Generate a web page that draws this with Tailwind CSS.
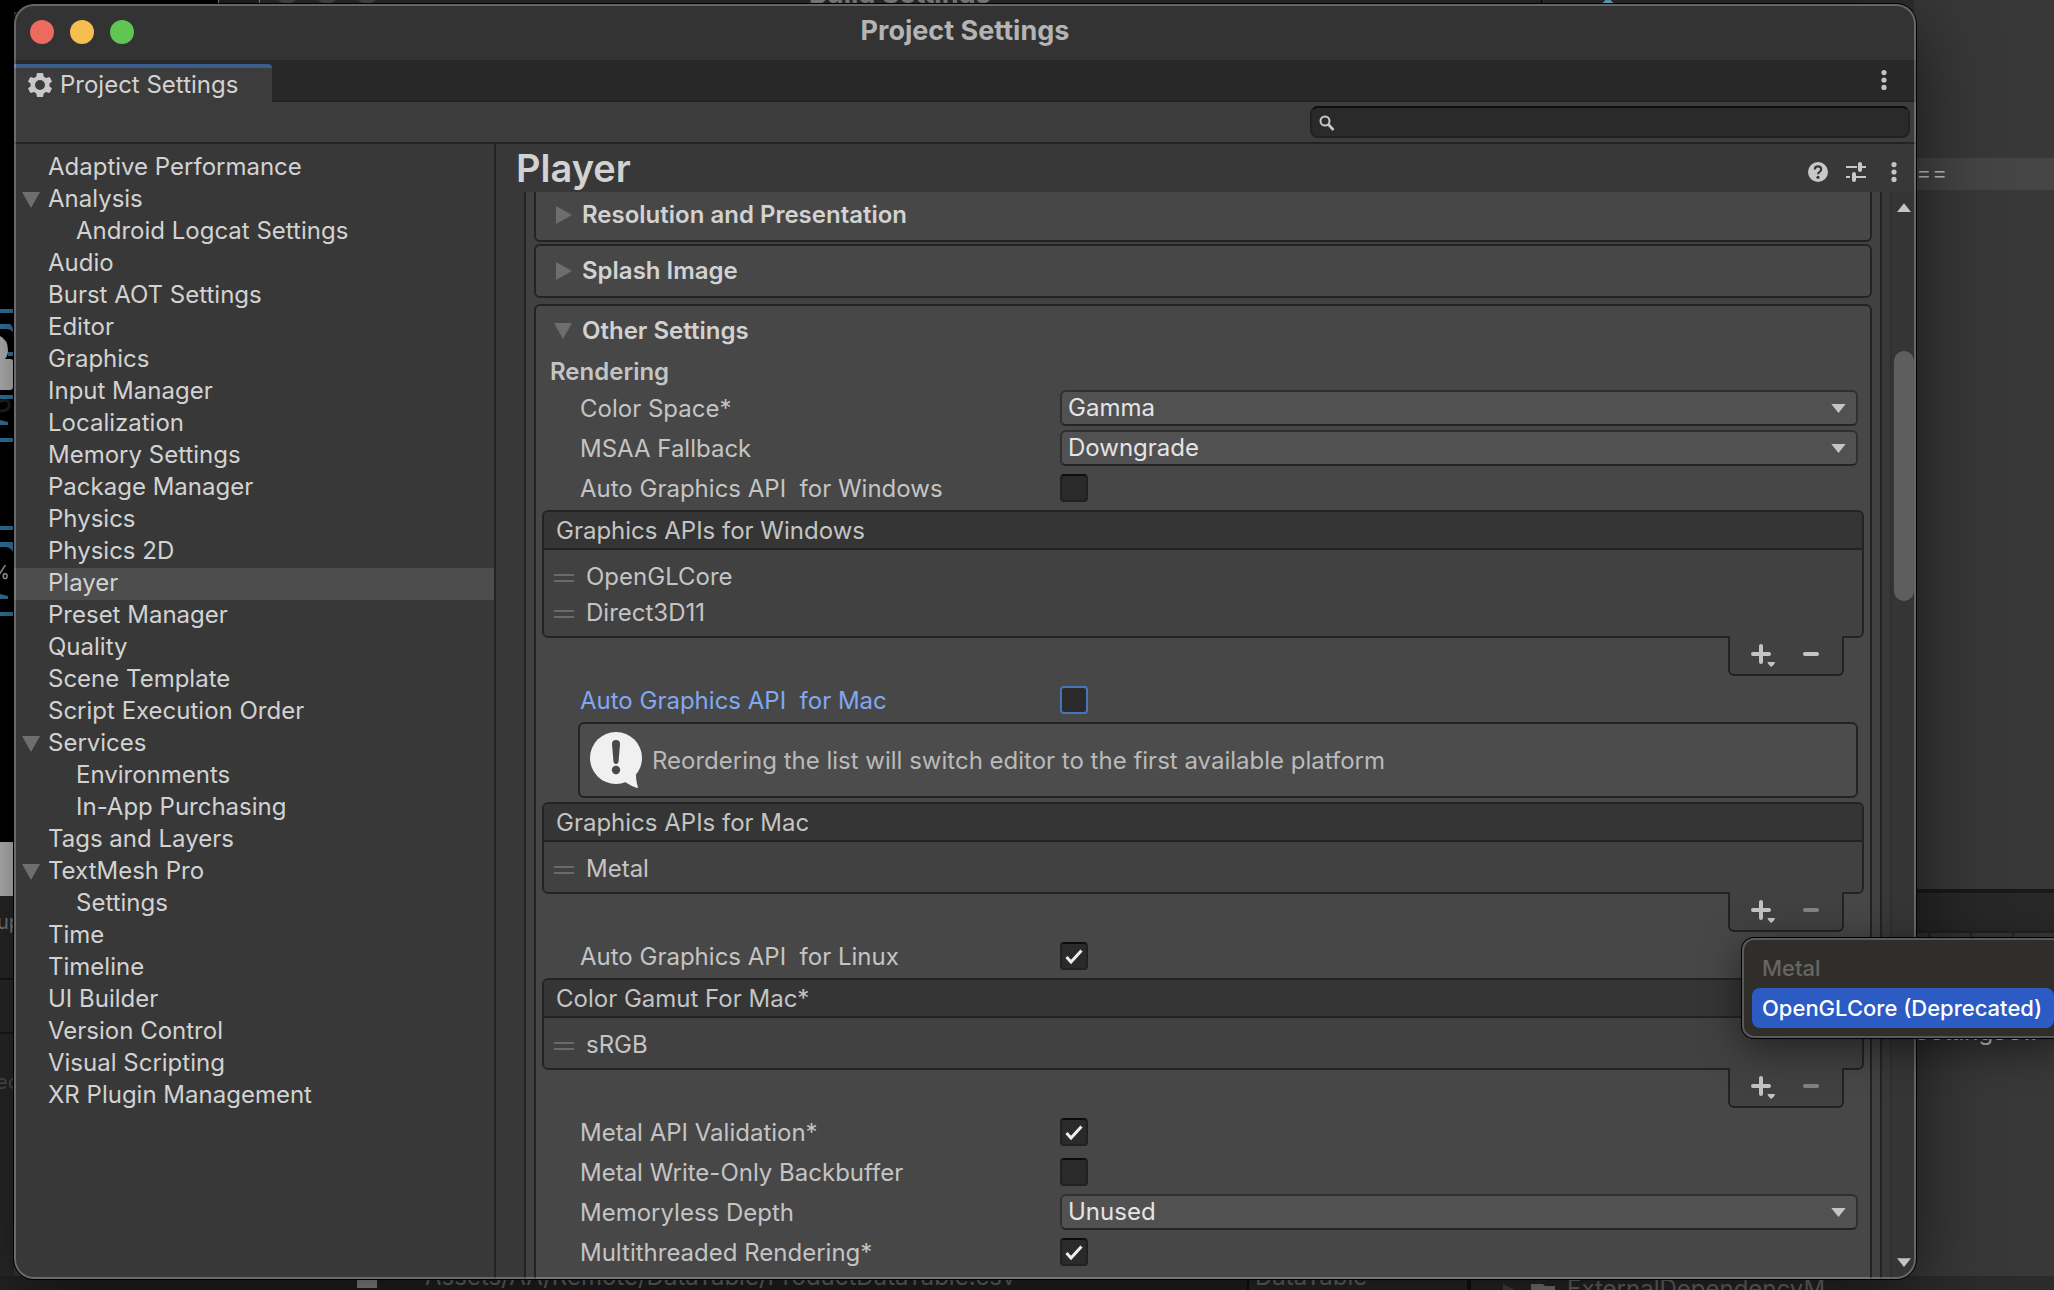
<!DOCTYPE html>
<html lang="en">
<head>
    <meta charset="UTF-8">
    <meta name="viewport" content="width=device-width, initial-scale=1.0">
    <title>Project Settings</title>
    <script src="https://cdn.jsdelivr.net/npm/@tailwindcss/browser@4"></script>
</head>
<body class="relative h-screen overflow-hidden bg-[#383838] font-[Inter,sans-serif] text-2xl leading-8 text-[#c4c4c4]">

    <!-- Shared icons -->
    <svg class="hidden">
        <symbol id="down" viewBox="0 0 16 10"><path d="M0 0h16l-8 10z" fill="currentColor"/></symbol>
        <symbol id="fold-open" viewBox="0 0 18 16"><path d="M0 0h18L9 16z" fill="#6e6e6e"/></symbol>
        <symbol id="fold-closed" viewBox="0 0 16 18"><path d="M0 0v18l16-9z" fill="#6e6e6e"/></symbol>
        <symbol id="dots" viewBox="0 0 6 20"><g fill="currentColor"><circle cx="3" cy="2.6" r="2.6"/><circle cx="3" cy="10" r="2.6"/><circle cx="3" cy="17.4" r="2.6"/></g></symbol>
        <symbol id="check" viewBox="0 0 28 28"><path d="M6.500 15l4.500 5L21.500 8.500" fill="none" stroke="#eeeeee" stroke-width="3"/></symbol>
        <symbol id="plus" viewBox="0 0 24 24"><path d="M2 11h16M10 3v16" stroke="currentColor" stroke-width="4" stroke-linecap="round"/><path d="M16.500 19h7.500q0 2-3.750 5q-3.750-3-3.750-5z" fill="currentColor"/></symbol>
        <symbol id="minus" viewBox="0 0 16 4"><path d="M2 2h12" stroke="currentColor" stroke-width="4" stroke-linecap="round"/></symbol>
    </svg>

    <!-- Windows behind the dialog -->
    <div class="absolute inset-x-0 top-0 h-3 bg-[#2d2d2d] flex overflow-hidden">
        <div class="w-[218px] shrink-0 bg-black"></div>
        <div class="w-[42px] shrink-0 border-x border-[#8a8a8a] bg-[#222222]"></div>
        <div class="flex gap-[18px] pl-4">
            <span class="size-[22px] -mt-[18px] rounded-full bg-[#4a4a4a]"></span>
            <span class="size-[22px] -mt-[18px] rounded-full bg-[#4a4a4a]"></span>
            <span class="size-[22px] -mt-[18px] rounded-full bg-[#4a4a4a]"></span>
        </div>
        <p class="-mt-[22px] ml-[431px] text-[27px] font-bold text-[#8a8a8a]">Build Settings</p>
        <span class="ml-[550px] h-3 border-l border-black"></span>
        <span class="ml-[60px] size-3 rotate-45 bg-[#6fb0dc]"></span>
    </div>
    <div class="absolute left-0 top-0 bottom-0 w-[14px] overflow-hidden bg-black flex flex-col">
        <div class="h-[842px] shrink-0">
            <svg class="w-[14px] h-[842px]" viewBox="0 0 14 842">
                <g fill="#3a7fb0">
                    <path d="M0 309h13v4H0zM0 324h10q3 1 3 8q-3-3-6-3H0zM8 352h5v4H8zM0 395h13v4H0zM0 420l8 2v3H0zM0 438h13v4H0zM0 526h13v4H0zM0 542h13v10q-3-5-8-5H0zM0 594l8 2v3H0zM0 612h13v4H0z"/>
                </g>
                <path d="M0 336q8 4 8 14q0 6-3 9h6q2 0 2 2v26q0 3-3 3H0z" fill="#c8c8c8"/>
                <path d="M0 402q5-3 9 0v5q-2 4-9 4" fill="none" stroke="#222222" stroke-width="3"/>
            </svg>
            <p class="-mt-[285px] -ml-[8px] text-lg leading-8">%</p>
        </div>
        <div class="h-[54px] shrink-0 bg-[#c8c8c8]"></div>
        <div class="grow bg-[#2a2a2a] text-xl leading-8 text-[#888888]">
            <p class="pt-[10px] -ml-[3px] h-[84px] border-b-2 border-[#191919]">up</p>
            <p class="h-[54px] border-b-2 border-[#191919]"></p>
            <p class="pt-8 -ml-[4px] text-[#555555]">ect</p>
        </div>
    </div>
    <div class="absolute right-0 top-0 bottom-0 w-[140px] overflow-hidden flex flex-col bg-[#383838]">
        <div class="mt-[158px] h-8 shrink-0 bg-[#454545] pl-[2px] font-light leading-[30px]">==</div>
        <div class="mt-[699px] h-[42px] shrink-0 border-t-4 border-[#191919] bg-[#282828]"></div>
        <div class="h-10 shrink-0 flex border-t-2 border-[#232323] pl-[14px]">
            <span class="w-[52px] border-l-2 border-[#232323]"></span><span class="w-[52px] border-l-2 border-[#232323]"></span><span class="w-[52px] border-l-2 border-[#232323]"></span>
        </div>
        <p class="mt-[45px] text-[#d2d2d2]">SettingsUI.</p>
    </div>
    <div class="absolute inset-x-0 bottom-0 h-[14px] overflow-hidden flex bg-[#242424] text-[#777777]">
        <span class="ml-[357px] mt-1 h-2 w-5 shrink-0 bg-[#9a9a9a]"></span>
        <p class="ml-12 -mt-[15px] w-[824px] shrink-0 border-r-2 border-[#111111]">Assets/AA/Remote/DataTable/ProductDataTable.csv</p>
        <p class="pl-[6px] -mt-[15px] w-[222px] shrink-0 border-r-4 border-[#111111] bg-[#2b2b2b]">DataTable</p>
        <span class="w-full flex bg-[#2b2b2b]">
            <svg class="ml-8 mt-2 h-4 w-16 shrink-0" viewBox="0 0 64 16"><path d="M0 0v16l16-8z" fill="#4c4c4c"/><path d="M28 0q0-2 2-2h8l4 4h10v14H28z" fill="#8a8a8a"/></svg>
            <span class="-mt-[3px]">ExternalDependencyM</span>
        </span>
    </div>

    <!-- Project Settings window -->
    <main class="absolute left-[14px] right-[138px] top-1 bottom-[11px] flex flex-col overflow-hidden rounded-[20px] bg-[#383838] ring-1 ring-black shadow-[0_20px_80px_rgba(0,0,0,0.6)]">
        <header class="relative h-14 shrink-0 flex items-center justify-center bg-[#333333]">
            <div class="absolute left-4 flex gap-4">
                <button aria-label="Close" class="size-6 rounded-full bg-[#ec6a5e]"></button>
                <button aria-label="Minimize" class="size-6 rounded-full bg-[#f4bf4f]"></button>
                <button aria-label="Zoom" class="size-6 rounded-full bg-[#61c554]"></button>
            </div>
            <h1 class="pb-[2px] text-[27px] font-bold text-[#b4b4b4]">Project Settings</h1>
        </header>

        <div class="h-[42px] shrink-0 flex items-end justify-between bg-[#282828]">
            <button class="h-[38px] w-[258px] flex items-center gap-2 rounded-tr-sm border-t-4 border-[#3a5f8f] bg-[#3c3c3c] pl-[14px] text-[#d2d2d2]">
                <svg class="size-6" viewBox="0 0 24 24"><path fill="#c8c8c8" fill-rule="evenodd" d="M9 0h6l.8 3.800 2.300 1.300 3.500-1.200 2.400 4.600-2.600 2.300v2.400l2.600 2.300-2.400 4.600-3.500-1.200-2.300 1.300L15 24H9l-.8-3.800-2.300-1.300-3.500 1.200L0 15.500l2.600-2.300v-2.400L0 8.500l2.400-4.600 3.500 1.200 2.300-1.300zM12 7a5 5 0 1 0 0 10a5 5 0 0 0 0-10z"/></svg>
                Project Settings
            </button>
            <div class="h-full grow flex items-center justify-end border-b-2 border-[#232323] pr-[29px]">
                <button aria-label="Window menu"><svg class="h-5 w-[6px]"><use href="#dots"/></svg></button>
            </div>
        </div>

        <div class="h-[42px] shrink-0 flex items-center justify-end border-b-2 border-[#232323] bg-[#3c3c3c] pr-[6px]">
            <label class="relative w-[600px]">
                <svg class="absolute left-[9px] top-[9px] size-4" viewBox="0 0 16 16" fill="none" stroke="#c8c8c8" stroke-width="2"><circle cx="6" cy="6" r="4.500"/><path d="M9 9l5.500 6" stroke-width="2.600"/></svg>
                <input type="search" aria-label="Search settings" class="block h-8 w-full rounded-lg border-2 border-[#212121] border-t-[#0d0d0d] bg-[#2a2a2a] pl-8 outline-none">
            </label>
        </div>

        <div class="min-h-0 grow flex">
            <nav class="w-[482px] shrink-0 border-r-2 border-[#232323] pt-2 leading-[30px] text-[#d2d2d2]">
                <a href="#" class="block h-8 pl-[34px]">Adaptive Performance</a>
                <a href="#" class="flex h-8 gap-2 pl-2"><svg class="mt-2 h-4 w-[18px]"><use href="#fold-open"/></svg>Analysis</a>
                <a href="#" class="block h-8 pl-[62px]">Android Logcat Settings</a>
                <a href="#" class="block h-8 pl-[34px]">Audio</a>
                <a href="#" class="block h-8 pl-[34px]">Burst AOT Settings</a>
                <a href="#" class="block h-8 pl-[34px]">Editor</a>
                <a href="#" class="block h-8 pl-[34px]">Graphics</a>
                <a href="#" class="block h-8 pl-[34px]">Input Manager</a>
                <a href="#" class="block h-8 pl-[34px]">Localization</a>
                <a href="#" class="block h-8 pl-[34px]">Memory Settings</a>
                <a href="#" class="block h-8 pl-[34px]">Package Manager</a>
                <a href="#" class="block h-8 pl-[34px]">Physics</a>
                <a href="#" class="block h-8 pl-[34px]">Physics 2D</a>
                <a href="#" class="block h-8 pl-[34px] bg-[#4d4d4d]">Player</a>
                <a href="#" class="block h-8 pl-[34px]">Preset Manager</a>
                <a href="#" class="block h-8 pl-[34px]">Quality</a>
                <a href="#" class="block h-8 pl-[34px]">Scene Template</a>
                <a href="#" class="block h-8 pl-[34px]">Script Execution Order</a>
                <a href="#" class="flex h-8 gap-2 pl-2"><svg class="mt-2 h-4 w-[18px]"><use href="#fold-open"/></svg>Services</a>
                <a href="#" class="block h-8 pl-[62px]">Environments</a>
                <a href="#" class="block h-8 pl-[62px]">In-App Purchasing</a>
                <a href="#" class="block h-8 pl-[34px]">Tags and Layers</a>
                <a href="#" class="flex h-8 gap-2 pl-2"><svg class="mt-2 h-4 w-[18px]"><use href="#fold-open"/></svg>TextMesh Pro</a>
                <a href="#" class="block h-8 pl-[62px]">Settings</a>
                <a href="#" class="block h-8 pl-[34px]">Time</a>
                <a href="#" class="block h-8 pl-[34px]">Timeline</a>
                <a href="#" class="block h-8 pl-[34px]">UI Builder</a>
                <a href="#" class="block h-8 pl-[34px]">Version Control</a>
                <a href="#" class="block h-8 pl-[34px]">Visual Scripting</a>
                <a href="#" class="block h-8 pl-[34px]">XR Plugin Management</a>
            </nav>

            <section class="min-w-0 grow flex flex-col">
                <div class="h-12 shrink-0 flex items-center pl-5 pr-[19px]">
                    <h2 class="grow text-[38px] leading-[44px] font-semibold text-[#d2d2d2]">Player</h2>
                    <div class="flex items-center gap-[18px] pt-2">
                        <button aria-label="Help"><svg class="size-5" viewBox="0 0 20 20"><circle cx="10" cy="10" r="10" fill="#c8c8c8"/><path d="M6.800 7.500q0-3.200 3.200-3.200t3.200 3q0 1.600-1.600 2.600q-1.600.9-1.600 2.300" fill="none" stroke="#383838" stroke-width="2.200"/><circle cx="10" cy="15.300" r="1.600" fill="#383838"/></svg></button>
                        <button aria-label="Presets"><svg class="size-5" viewBox="0 0 20 20" stroke="#c8c8c8" stroke-width="2"><path d="M0 5h11M16 5h4M0 15h4M9 15h11"/><path d="M14 2v6M8 12v6" stroke-width="4" stroke-linecap="round"/></svg></button>
                        <button aria-label="Player menu" class="pl-[7px]"><svg class="h-5 w-[6px]"><use href="#dots"/></svg></button>
                    </div>
                </div>

                <div class="min-h-0 grow flex">
                    <div class="min-w-0 grow ml-7 mr-2 flex flex-col overflow-hidden border-x-2 border-[#232323] bg-[#414141] px-2">
                        <button class="h-[50px] shrink-0 flex items-center gap-[10px] rounded-b-md border-x-2 border-b-2 border-[#232323] bg-[#474747] pl-5 pb-[2px] font-semibold text-[#d2d2d2]">
                            <svg class="h-[18px] w-4"><use href="#fold-closed"/></svg>Resolution and Presentation
                        </button>
                        <button class="mt-[2px] h-[54px] shrink-0 flex items-center gap-[10px] rounded-md border-2 border-[#232323] bg-[#474747] pl-5 font-semibold text-[#d2d2d2]">
                            <svg class="h-[18px] w-4"><use href="#fold-closed"/></svg>Splash Image
                        </button>

                        <div class="mt-[6px] h-[1200px] shrink-0 rounded-t-md border-2 border-[#232323] bg-[#474747] px-[6px]">
                            <button class="h-[50px] flex items-center gap-[10px] pl-3 font-semibold text-[#d2d2d2]">
                                <svg class="h-4 w-[18px]"><use href="#fold-open"/></svg>Other Settings
                            </button>
                            <h3 class="h-8 pl-2 leading-8 font-semibold">Rendering</h3>

                            <div class="h-10 flex items-center pl-[38px] pr-[6px]">
                                <label for="color-space" class="w-[480px] shrink-0 pt-[2px]">Color Space*</label>
                                <div class="relative grow">
                                    <select id="color-space" class="block h-9 w-full appearance-none rounded-md border-2 border-[#303030] border-b-[#242424] bg-[#515151] pl-[6px] leading-8 text-[#e4e4e4]"><option>Gamma</option><option>Linear</option></select>
                                    <svg class="pointer-events-none absolute right-3 top-[14px] h-[9px] w-[15px]"><use href="#down"/></svg>
                                </div>
                            </div>
                            <div class="h-10 flex items-center pl-[38px] pr-[6px]">
                                <label for="msaa" class="w-[480px] shrink-0 pt-[2px]">MSAA Fallback</label>
                                <div class="relative grow">
                                    <select id="msaa" class="block h-9 w-full appearance-none rounded-md border-2 border-[#303030] border-b-[#242424] bg-[#515151] pl-[6px] leading-8 text-[#e4e4e4]"><option>Downgrade</option><option>Upgrade</option></select>
                                    <svg class="pointer-events-none absolute right-3 top-[14px] h-[9px] w-[15px]"><use href="#down"/></svg>
                                </div>
                            </div>
                            <div class="h-10 flex items-center pl-[38px]">
                                <label for="auto-windows" class="w-[480px] shrink-0 pt-[2px] whitespace-pre">Auto Graphics API  for Windows</label>
                                <input id="auto-windows" type="checkbox" class="size-7 appearance-none rounded-sm border-2 border-[#212121] border-t-[#0d0d0d] bg-[#2a2a2a]">
                            </div>

                            <div class="mt-[2px]">
                                <div class="rounded-md border-2 border-[#232323] bg-[#414141]">
                                    <h4 class="h-[38px] rounded-t-sm border-b-2 border-[#232323] bg-[#353535] pl-3 leading-[38px]">Graphics APIs for Windows</h4>
                                    <ul class="pt-2 pb-[6px]">
                                        <li class="h-9 flex items-center gap-3 pl-[10px] pt-[2px]"><span class="mt-[2px] h-2 w-5 border-y-2 border-[#6b6b6b]"></span>OpenGLCore</li>
                                        <li class="h-9 flex items-center gap-3 pl-[10px] pt-[2px]"><span class="mt-[2px] h-2 w-5 border-y-2 border-[#6b6b6b]"></span>Direct3D11</li>
                                    </ul>
                                </div>
                                <div class="relative -mt-[2px] ml-auto mr-5 h-10 w-[116px] flex items-start gap-7 rounded-b-md border-x-2 border-b-2 border-[#232323] bg-[#414141] pl-[21px]">
                                    <button aria-label="Add Windows API" class="pt-[7px]"><svg class="size-6"><use href="#plus"/></svg></button>
                                    <button aria-label="Remove Windows API" class="flex pt-4"><svg class="h-1 w-4"><use href="#minus"/></svg></button>
                                </div>
                            </div>

                            <div class="mt-1 h-10 flex items-center pl-[38px]">
                                <label for="auto-mac" class="w-[480px] shrink-0 pt-[2px] whitespace-pre text-[#81a8f0]">Auto Graphics API  for Mac</label>
                                <input id="auto-mac" type="checkbox" class="size-7 appearance-none rounded-sm border-2 border-[#4576b8] bg-[#2a2a2a]">
                            </div>
                            <div class="mt-[2px] ml-9 mr-[6px] h-[76px] flex items-center rounded-md border-2 border-[#232323] bg-[#4c4c4c] pl-[10px] text-[#bababa]">
                                <svg class="h-14 w-[52px] shrink-0" viewBox="0 0 52 56"><circle cx="26" cy="26" r="26" fill="#f0f0f0"/><path d="M35 50l11-8q0 8 2 13q0 1-1 1q-6-2-12-6z" fill="#f0f0f0"/><path d="M22 12q0-4 4-4t4 4l-1.500 18q-.5 2-2.500 2t-2.500-2z" fill="#484848"/><circle cx="26" cy="38" r="4.200" fill="#484848"/></svg>
                                <p class="pl-[10px] pt-[2px]">Reordering the list will switch editor to the first available platform</p>
                            </div>

                            <div class="mt-1">
                                <div class="rounded-md border-2 border-[#232323] bg-[#414141]">
                                    <h4 class="h-[38px] rounded-t-sm border-b-2 border-[#232323] bg-[#353535] pl-3 leading-[38px]">Graphics APIs for Mac</h4>
                                    <ul class="pt-2 pb-[6px]">
                                        <li class="h-9 flex items-center gap-3 pl-[10px] pt-[2px]"><span class="mt-[2px] h-2 w-5 border-y-2 border-[#6b6b6b]"></span>Metal</li>
                                    </ul>
                                </div>
                                <div class="relative -mt-[2px] ml-auto mr-5 h-10 w-[116px] flex items-start gap-7 rounded-b-md border-x-2 border-b-2 border-[#232323] bg-[#414141] pl-[21px]">
                                    <button aria-label="Add Mac API" class="pt-[7px]"><svg class="size-6"><use href="#plus"/></svg></button>
                                    <button aria-label="Remove Mac API" disabled class="flex pt-4 text-[#828282]"><svg class="h-1 w-4"><use href="#minus"/></svg></button>
                                </div>
                            </div>

                            <div class="mt-1 h-10 flex items-center pl-[38px]">
                                <label for="auto-linux" class="w-[480px] shrink-0 pt-[2px] whitespace-pre">Auto Graphics API  for Linux</label>
                                <div class="relative">
                                    <input id="auto-linux" type="checkbox" checked class="peer block size-7 appearance-none rounded-sm border-2 border-[#212121] border-t-[#0d0d0d] bg-[#2a2a2a]">
                                    <svg class="pointer-events-none absolute inset-0 hidden size-7 peer-checked:block"><use href="#check"/></svg>
                                </div>
                            </div>

                            <div class="mt-[2px]">
                                <div class="rounded-md border-2 border-[#232323] bg-[#414141]">
                                    <h4 class="h-[38px] rounded-t-sm border-b-2 border-[#232323] bg-[#353535] pl-3 leading-[38px]">Color Gamut For Mac*</h4>
                                    <ul class="pt-2 pb-[6px]">
                                        <li class="h-9 flex items-center gap-3 pl-[10px] pt-[2px]"><span class="mt-[2px] h-2 w-5 border-y-2 border-[#6b6b6b]"></span>sRGB</li>
                                    </ul>
                                </div>
                                <div class="relative -mt-[2px] ml-auto mr-5 h-10 w-[116px] flex items-start gap-7 rounded-b-md border-x-2 border-b-2 border-[#232323] bg-[#414141] pl-[21px]">
                                    <button aria-label="Add color gamut" class="pt-[7px]"><svg class="size-6"><use href="#plus"/></svg></button>
                                    <button aria-label="Remove color gamut" disabled class="flex pt-4 text-[#828282]"><svg class="h-1 w-4"><use href="#minus"/></svg></button>
                                </div>
                            </div>

                            <div class="mt-1 h-10 flex items-center pl-[38px]">
                                <label for="metal-validation" class="w-[480px] shrink-0 pt-[2px]">Metal API Validation*</label>
                                <div class="relative">
                                    <input id="metal-validation" type="checkbox" checked class="peer block size-7 appearance-none rounded-sm border-2 border-[#212121] border-t-[#0d0d0d] bg-[#2a2a2a]">
                                    <svg class="pointer-events-none absolute inset-0 hidden size-7 peer-checked:block"><use href="#check"/></svg>
                                </div>
                            </div>
                            <div class="h-10 flex items-center pl-[38px]">
                                <label for="backbuffer" class="w-[480px] shrink-0 pt-[2px]">Metal Write-Only Backbuffer</label>
                                <input id="backbuffer" type="checkbox" class="size-7 appearance-none rounded-sm border-2 border-[#212121] border-t-[#0d0d0d] bg-[#2a2a2a]">
                            </div>
                            <div class="h-10 flex items-center pl-[38px] pr-[6px]">
                                <label for="depth" class="w-[480px] shrink-0 pt-[2px]">Memoryless Depth</label>
                                <div class="relative grow">
                                    <select id="depth" class="block h-9 w-full appearance-none rounded-md border-2 border-[#303030] border-b-[#242424] bg-[#515151] pl-[6px] leading-8 text-[#e4e4e4]"><option>Unused</option><option>Forced</option></select>
                                    <svg class="pointer-events-none absolute right-3 top-[14px] h-[9px] w-[15px]"><use href="#down"/></svg>
                                </div>
                            </div>
                            <div class="h-10 flex items-center pl-[38px]">
                                <label for="multithreaded" class="w-[480px] shrink-0 pt-[2px]">Multithreaded Rendering*</label>
                                <div class="relative">
                                    <input id="multithreaded" type="checkbox" checked class="peer block size-7 appearance-none rounded-sm border-2 border-[#212121] border-t-[#0d0d0d] bg-[#2a2a2a]">
                                    <svg class="pointer-events-none absolute inset-0 hidden size-7 peer-checked:block"><use href="#check"/></svg>
                                </div>
                            </div>
                        </div>
                    </div>

                    <!-- Scroll bar -->
                    <div class="w-[26px] shrink-0 flex flex-col items-center border-l-2 border-[#303030] bg-[#353535] pt-[11px] pb-3">
                        <button aria-label="Scroll up"><svg class="block h-[9px] w-[14px] rotate-180"><use href="#down"/></svg></button>
                        <div class="mt-[139px] h-[250px] w-5 rounded-full bg-[#5e5e5e]"></div>
                        <button aria-label="Scroll down" class="mt-auto"><svg class="block h-[9px] w-[14px]"><use href="#down"/></svg></button>
                    </div>
                </div>
            </section>
        </div>
        <div class="pointer-events-none absolute inset-0 rounded-[20px] border-2 border-white/25"></div>
    </main>

    <!-- Add API menu -->
    <div role="menu" class="absolute -right-[10px] top-[938px] w-[322px] rounded-xl border-2 border-[#5a5a58] bg-[#2f2e2b] p-2 text-[22px] font-medium ring-1 ring-black shadow-[0_10px_40px_rgba(0,0,0,0.5)]">
        <button role="menuitem" disabled class="block h-10 w-full pl-[10px] text-left text-[#666664]">Metal</button>
        <button role="menuitem" class="block h-10 w-full whitespace-nowrap rounded-lg bg-[#2c5bc3] pl-[10px] text-left text-white">OpenGLCore (Deprecated)</button>
    </div>
</body>
</html>
